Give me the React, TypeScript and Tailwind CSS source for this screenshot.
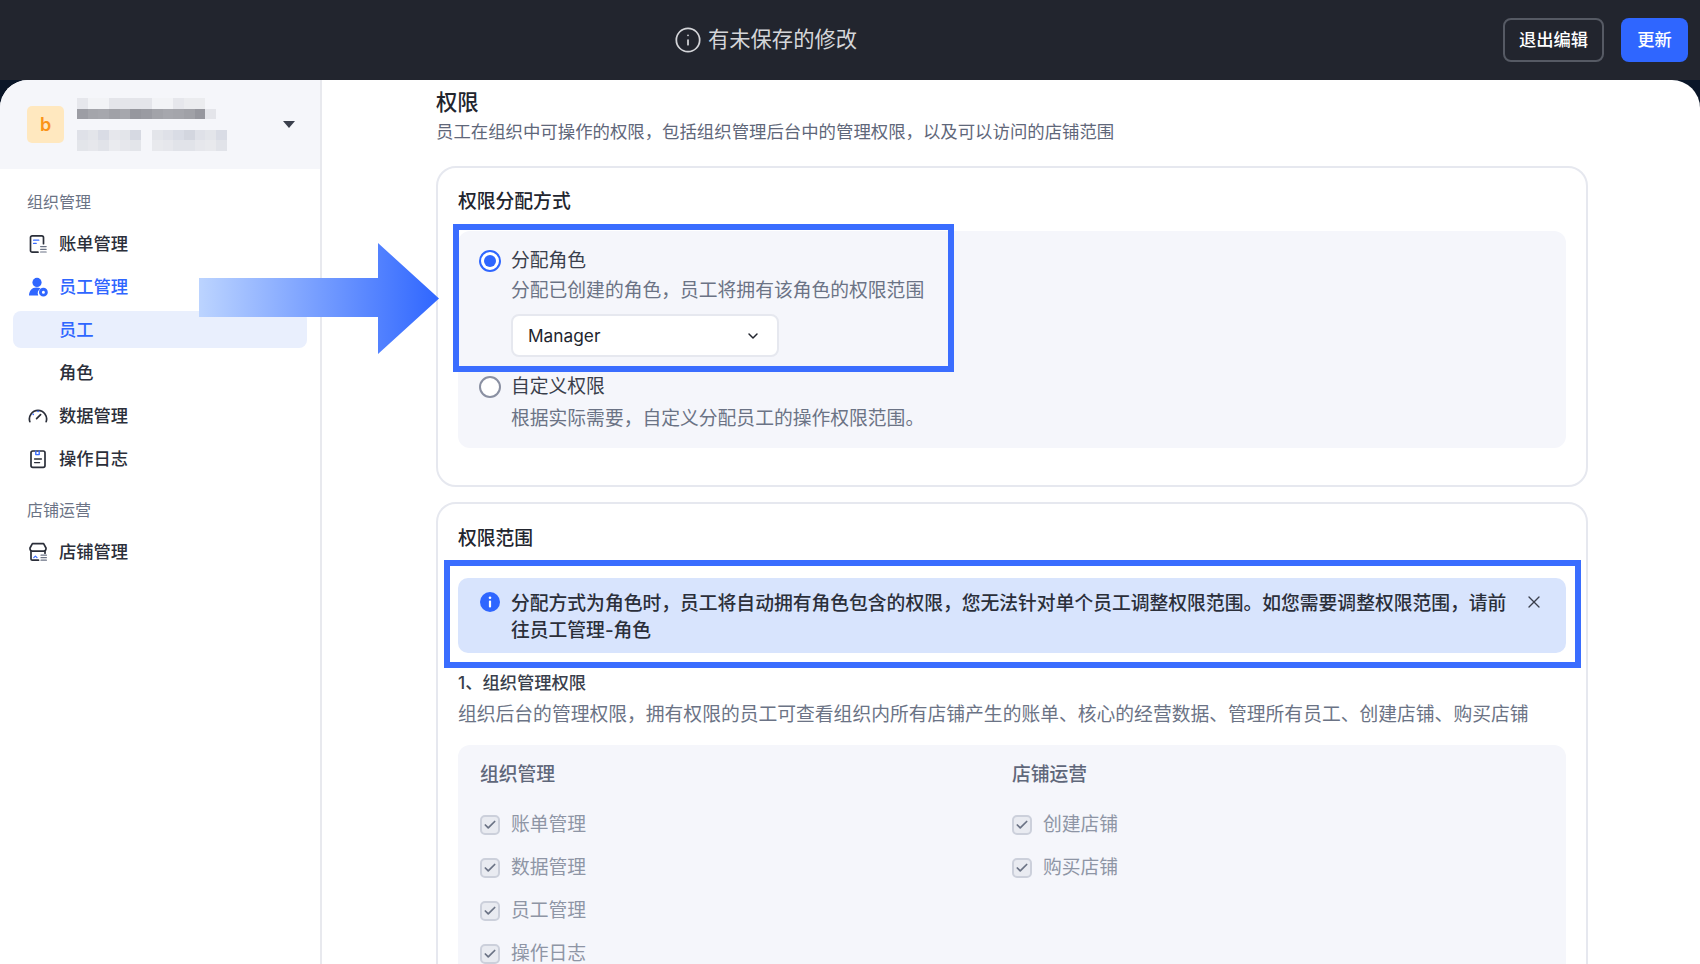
import React from 'react';
import { ChevronDown, Info, X, Check } from 'lucide-react';

const CJK = `font-['Inter','Noto_Sans_CJK_SC',sans-serif]`;

// mosaic over the org name in the sidebar header
const mosaic: string[][] = [
  ['#e6e7ec', '#f2f3f6', '#f2f3f6', '#e4e5ea', '#e4e5ea', '#e4e5ea', '#e4e5ea', '#f2f3f6', '#f2f3f6', '#e6e7ec', '#ebecef', '#ebecef', '#f5f6fa', '#f5f6fa'],
  ['#9c9da4', '#a4a5ab', '#a6a7ad', '#a0a1a7', '#a6a7ad', '#96979e', '#9a9ba2', '#a2a3a9', '#a6a7ad', '#a4a5ab', '#a0a1a7', '#96979e', '#e4e5ea', '#f5f6fa'],
  ['#f5f6fa', '#f5f6fa', '#f5f6fa', '#f5f6fa', '#f5f6fa', '#f5f6fa', '#f5f6fa', '#f5f6fa', '#f5f6fa', '#f5f6fa', '#f5f6fa', '#f5f6fa', '#f5f6fa', '#f5f6fa'],
  ['#dfe1e8', '#e3e5ea', '#d9dce5', '#e6e7ec', '#e3e5ea', '#d6d9e2', '#f5f6fa', '#e3e5ea', '#dfe1e8', '#d9dce5', '#d3d6df', '#dfe1e8', '#e3e5ea', '#d9dce5'],
  ['#e3e5ea', '#e6e7ec', '#e1e3e9', '#eaebef', '#e6e7ec', '#e3e5ea', '#f5f6fa', '#e8e9ed', '#e6e7ec', '#e1e3e9', '#e1e3e9', '#e6e7ec', '#e8e9ed', '#e1e3e9'],
];

const BillIcon = () => (
  <svg viewBox="0 0 20 20" className="w-5 h-5 shrink-0" fill="none" stroke="#2b2f3a" strokeWidth="1.7" strokeLinecap="round" strokeLinejoin="round">
    <path d="M10 18.2H4.2a1.7 1.7 0 0 1-1.7-1.7V3.5a1.7 1.7 0 0 1 1.7-1.7h9.6a1.7 1.7 0 0 1 1.7 1.7v6.2" />
    <path d="M5.6 6.2h5.2M5.6 9.4h2.6" stroke="#3a6dff" strokeWidth="1.3" />
    <path d="M12.6 12.6h5.6M12.6 15.3h5.6M12.6 18h5.6" stroke="#6b7385" strokeWidth="1.2" />
  </svg>
);

const StaffIcon = () => (
  <svg viewBox="0 0 20 20" className="w-5 h-5 shrink-0" fill="#2f66ff">
    <circle cx="9" cy="5.4" r="4.6" />
    <path d="M1 18.6c0-4.8 3-8.2 7.4-8.2 1.6 0 3 .4 4.2 1.2a5.8 5.8 0 0 0-2.4 7H1z" />
    <path fillRule="evenodd" d="M15.4 10.8a4.4 4.4 0 1 1 0 8.8 4.4 4.4 0 0 1 0-8.8zm0 2.9a1.5 1.5 0 1 0 0 3 1.5 1.5 0 0 0 0-3z" />
  </svg>
);

const GaugeIcon = () => (
  <svg viewBox="0 0 20 20" className="w-5 h-5 shrink-0" fill="none" stroke="#2b2f3a" strokeWidth="1.7" strokeLinecap="round">
    <path d="M1.8 15.6a8.6 8.6 0 1 1 16.4 0" />
    <path d="M8.6 12.6l4-4" />
    <path d="M5.2 8.4h.1M10 5.4h.1" stroke="#3a6dff" strokeWidth="1.6" />
  </svg>
);

const LogIcon = () => (
  <svg viewBox="0 0 20 20" className="w-5 h-5 shrink-0" fill="none" stroke="#2b2f3a" strokeWidth="1.7" strokeLinecap="round" strokeLinejoin="round">
    <rect x="3" y="2" width="14" height="16.4" rx="1.8" />
    <path d="M7.8 2v3.6h3.4V2" stroke="#3a6dff" strokeWidth="1.4" />
    <path d="M6.6 10h6.8M6.6 13.6h5" strokeWidth="1.4" />
  </svg>
);

const StoreIcon = () => (
  <svg viewBox="0 0 20 20" className="w-5 h-5 shrink-0" fill="none" stroke="#2b2f3a" strokeWidth="1.7" strokeLinecap="round" strokeLinejoin="round">
    <path d="M4.4 1.6h11.2l2.4 4.4v.8a2.6 2.6 0 0 1-2.7 2.3H4.700a2.600 2.600 0 0 1-2.700-2.300V6z" />
    <path d="M3 9.400v7.500a1.300 1.300 0 0 0 1.300 1.300h6.200M17 9.400v1.800" />
    <path d="M5.800 15.600l1.600-1.500 1.600 1.500" stroke="#3a6dff" strokeWidth="1.300" />
    <path d="M13 13.200h5.400M13 15.700h5.400M13 18.200h5.400" stroke="#6b7385" strokeWidth="1.200" />
  </svg>
);

const Radio = ({ checked }: { checked?: boolean }) => (
  <span className={`w-[22px] h-[22px] shrink-0 rounded-full border-[2.5px] bg-white flex items-center justify-center ${checked ? 'border-[#2f66ff]' : 'border-[#8a90a2]'}`}>
    {checked && <span className="w-3 h-3 rounded-full bg-[#2f66ff]" />}
  </span>
);

const CheckItem = ({ label }: { label: string }) => (
  <div className="h-[26px] flex items-center gap-[11px] text-[18.8px] text-[#8e95a5]">
    <span className="w-5 h-5 rounded-[5px] border-2 border-[#ccd0db] bg-[#e9ebf1] flex items-center justify-center">
      <Check className="w-3.5 h-3.5 text-[#6b7385]" strokeWidth={3} />
    </span>
    {label}
  </div>
);

const NavItem = ({ icon, label, active }: { icon: React.ReactNode; label: string; active?: boolean }) => (
  <div className={`h-[43px] pl-[28px] flex items-center gap-[11px] text-[17.3px] font-medium ${active ? 'text-[#2f66ff]' : 'text-[#2b2f3a]'}`}>
    {icon}
    {label}
  </div>
);

export default function App() {
  return (
    <div className={`relative w-[1700px] h-[964px] overflow-hidden bg-[#0a1628] ${CJK}`}>
      {/* unsaved changes bar */}
      <div className="relative h-20 bg-[#22252e] flex items-center justify-center pr-[1px]">
        <div className="flex items-center gap-[6px] text-[21.3px] text-[#d4d5d9] mr-[168px]">
          <Info className="w-7 h-7" strokeWidth={1.5} />
          有未保存的修改
        </div>
        <div className="absolute right-3 top-[18px] flex gap-[17px]">
          <button className="w-[101px] h-[44px] rounded-lg border-2 border-[#565a64] text-white text-[17.3px] font-medium">退出编辑</button>
          <button className="w-[67px] h-[44px] rounded-lg bg-[#2f66ff] text-white text-[17.3px] font-medium">更新</button>
        </div>
      </div>

      <div className="flex h-[884px] rounded-t-[28px] overflow-hidden bg-white">
        {/* sidebar */}
        <aside className="w-[322px] shrink-0 border-r-2 border-[#e8e9ee]">
          <div className="h-[89px] bg-[#f5f6fa] pl-[27px] pr-[25px] flex items-center">
            <div className="w-[37px] h-[37px] rounded-[5px] bg-[#ffe8bf] text-[#fa9419] text-[18px] font-semibold flex items-center justify-center">b</div>
            <div className="ml-[13px] flex-1">
              {mosaic.map((row, i) => (
                <div key={i} className="flex">
                  {row.map((c, j) => (
                    <span key={j} className="w-[10.7px] h-[10.6px]" style={{ backgroundColor: c }} />
                  ))}
                </div>
              ))}
            </div>
            <span className="w-0 h-0 border-x-[6px] border-t-[7px] border-x-transparent border-t-[#3a3f4c]" />
          </div>

          <div className="mt-[20px] pl-[27px] h-[26px] text-[16px] leading-[26px] text-[#6b7385]">组织管理</div>
          <div className="mt-[7px]">
            <NavItem icon={<BillIcon />} label="账单管理" />
            <NavItem icon={<StaffIcon />} label="员工管理" active />
            <div className="h-[43px] px-[13px] flex items-center">
              <div className="w-full h-[37px] rounded-lg bg-[#e9effd] pl-[46px] flex items-center text-[17.3px] font-medium text-[#2f66ff]">员工</div>
            </div>
            <div className="h-[43px] pl-[59px] flex items-center text-[17.3px] font-medium text-[#2b2f3a]">角色</div>
            <NavItem icon={<GaugeIcon />} label="数据管理" />
            <NavItem icon={<LogIcon />} label="操作日志" />
          </div>
          <div className="mt-[17px] pl-[27px] h-[26px] text-[16px] leading-[26px] text-[#6b7385]">店铺运营</div>
          <div className="mt-[7px]">
            <NavItem icon={<StoreIcon />} label="店铺管理" />
          </div>
        </aside>

        {/* form */}
        <main className="flex-1 pl-[114px] pt-2 overflow-hidden">
          <div className="w-[1152px]">
            <h1 className="text-[21.3px] leading-7 font-medium text-[#22252e]">权限</h1>
            <p className="mt-[3px] text-[17.4px] leading-[26px] text-[#5f677a]">员工在组织中可操作的权限，包括组织管理后台中的管理权限，以及可以访问的店铺范围</p>

            <section className="mt-[21px] h-[321px] rounded-[20px] border-2 border-[#e6e8ef] pt-[21px] px-[20px]">
              <h2 className="text-[18.8px] leading-[26px] font-medium text-[#22252e]">权限分配方式</h2>
              <div className="relative mt-4 h-[217px] rounded-xl bg-[#f5f6fb] pt-[17px] pl-[21px]">
                <div className="flex items-center gap-[10px] h-[26px] text-[18.8px] text-[#3a3f4c]">
                  <Radio checked />
                  分配角色
                </div>
                <p className="mt-1 ml-[32px] text-[18.8px] leading-[26px] text-[#6b7385]">分配已创建的角色，员工将拥有该角色的权限范围</p>
                <div className="mt-[10px] ml-[32px] w-[268px] h-[43px] rounded-lg border-2 border-[#e6e8ef] bg-white pl-[15px] pr-[16px] flex items-center justify-between text-[17.3px] text-[#22252e]">
                  Manager
                  <ChevronDown className="w-4 h-4" strokeWidth={2.2} />
                </div>
                <div className="mt-[17px] flex items-center gap-[10px] h-[26px] text-[18.8px] text-[#3a3f4c]">
                  <Radio />
                  自定义权限
                </div>
                <p className="mt-[6px] ml-[32px] text-[18.8px] leading-[26px] text-[#6b7385]">根据实际需要，自定义分配员工的操作权限范围。</p>
                <div className="absolute -left-[5px] -top-[7px] w-[501px] h-[148px] border-[6px] border-[#3a6dff] pointer-events-none" />
              </div>
            </section>

            <section className="mt-[15px] h-[600px] rounded-[20px] border-2 border-[#e6e8ef] pt-[22px] px-[20px]">
              <h2 className="text-[18.8px] leading-[26px] font-medium text-[#22252e]">权限范围</h2>
              <div className="relative mt-[26px] h-[75px] rounded-[10px] bg-[#d8e4fd] pt-3 pl-[22px] pr-[21px] flex">
                <svg viewBox="0 0 20 20" className="w-5 h-5 shrink-0 mt-[2px]">
                  <circle cx="10" cy="10" r="10" fill="#2f66ff" />
                  <rect x="8.900" y="8.500" width="2.200" height="7" rx="1" fill="#fff" />
                  <circle cx="10" cy="5.800" r="1.300" fill="#fff" />
                </svg>
                <p className="ml-[11px] w-[1004px] text-[18.8px] leading-[27px] font-medium text-[#2b2f3a]">分配方式为角色时，员工将自动拥有角色包含的权限，您无法针对单个员工调整权限范围。如您需要调整权限范围，请前往员工管理-角色</p>
                <X className="absolute right-[22px] top-[14px] w-5 h-5 text-[#3a3f4c]" strokeWidth={1.6} />
                <div className="absolute -left-[14px] -top-[18px] -right-[15px] -bottom-[15px] border-[6px] border-[#3a6dff] pointer-events-none" />
              </div>
              <h3 className="mt-[17px] text-[17.3px] leading-[26px] font-medium text-[#3a3f4c]">1、组织管理权限</h3>
              <p className="mt-[6px] text-[18.8px] leading-[26px] text-[#6b7385]">组织后台的管理权限，拥有权限的员工可查看组织内所有店铺产生的账单、核心的经营数据、管理所有员工、创建店铺、购买店铺</p>
              <div className="mt-[17px] h-[300px] rounded-xl bg-[#f5f6fb] pt-[17px] pl-[22px] grid grid-cols-[532px_1fr]">
                <div>
                  <div className="text-[18.8px] leading-[26px] font-medium text-[#5f677a]">组织管理</div>
                  <div className="mt-6 flex flex-col gap-[17px]">
                    <CheckItem label="账单管理" />
                    <CheckItem label="数据管理" />
                    <CheckItem label="员工管理" />
                    <CheckItem label="操作日志" />
                  </div>
                </div>
                <div>
                  <div className="text-[18.8px] leading-[26px] font-medium text-[#5f677a]">店铺运营</div>
                  <div className="mt-6 flex flex-col gap-[17px]">
                    <CheckItem label="创建店铺" />
                    <CheckItem label="购买店铺" />
                  </div>
                </div>
              </div>
            </section>
          </div>
        </main>
      </div>

      {/* callout arrow over the page */}
      <svg viewBox="0 0 240 111" className="absolute left-[199px] top-[243px] w-[240px] h-[111px] pointer-events-none">
        <defs>
          <linearGradient id="callout" x1="0" x2="1" y1="0" y2="0">
            <stop offset="0" stopColor="#bcd4ff" />
            <stop offset="1" stopColor="#2f66ff" />
          </linearGradient>
        </defs>
        <polygon points="0,35 179,35 179,0 240,55.500 179,111 179,74 0,74" fill="url(#callout)" />
      </svg>
    </div>
  );
}
